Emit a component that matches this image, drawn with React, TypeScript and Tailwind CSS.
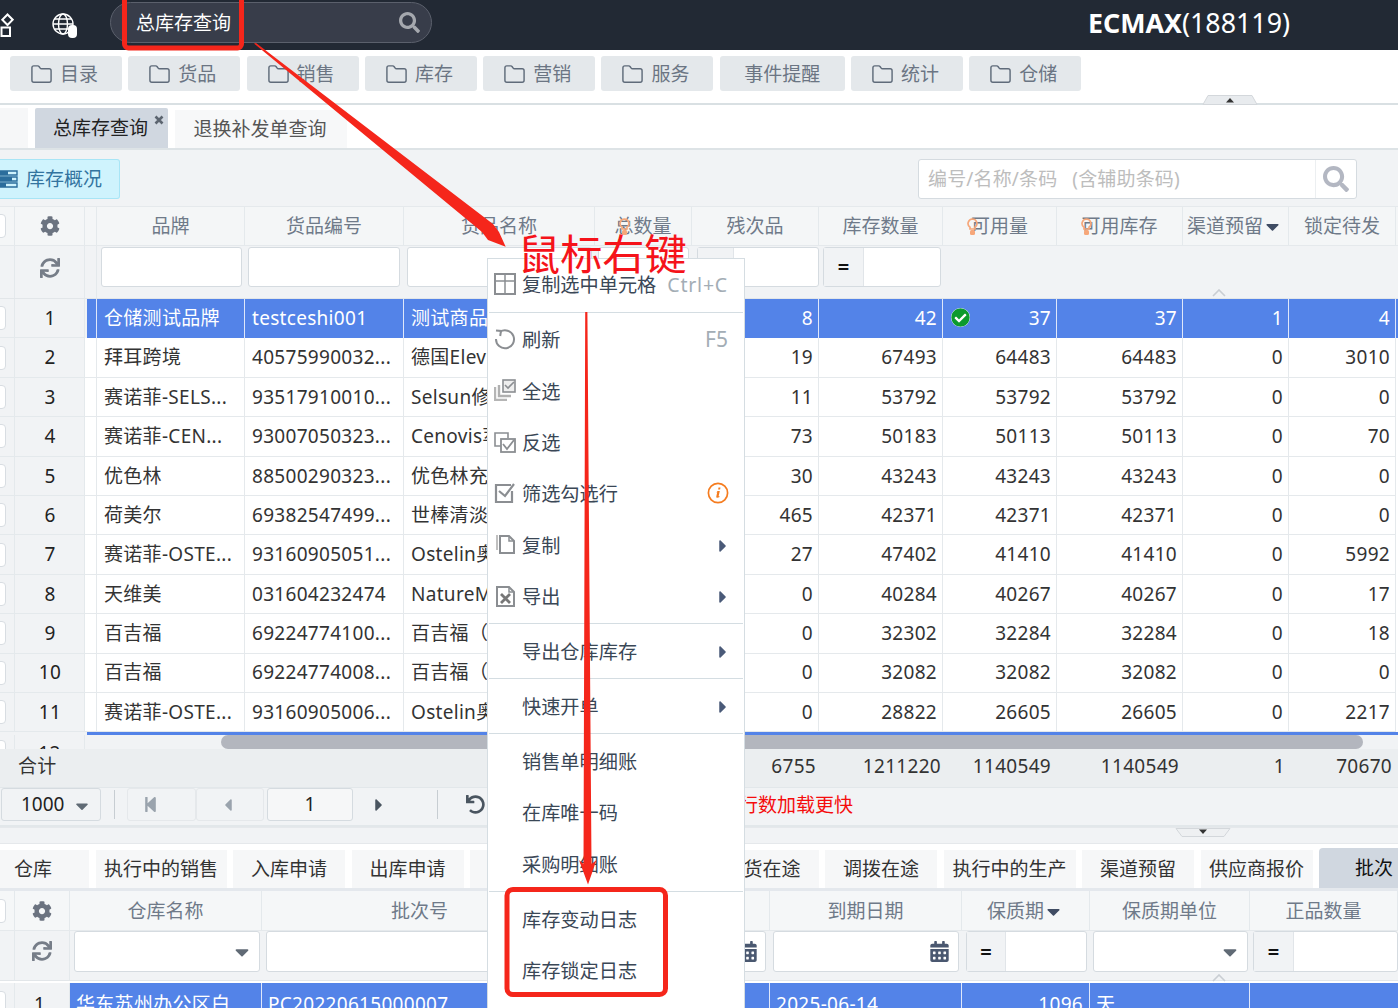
import React from "react";
import { Folder } from "lucide-react";
import {
  FaCog, FaSync, FaSearch, FaStepBackward, FaCaretLeft, FaCaretRight, FaCaretDown, FaUndo,
  FaCalendarAlt, FaCheckCircle,
} from "react-icons/fa";

const G1 = "grid grid-cols-[15px_70px_12px_148px_159px_191px_97px_127px_124px_114px_126px_106px_107px_2px]";
const G2 = "grid grid-cols-[15px_55px_192px_316px_192px_192px_128px_160px_148px]";

const rows: string[][] = [
  ["1", "仓储测试品牌", "testceshi001", "测试商品", "", "8", "42", "37", "37", "1", "4"],
  ["2", "拜耳跨境", "40575990032...", "德国Elevit", "", "19", "67493", "64483", "64483", "0", "3010"],
  ["3", "赛诺菲-SELS...", "93517910010...", "Selsun修护", "", "11", "53792", "53792", "53792", "0", "0"],
  ["4", "赛诺菲-CEN...", "93007050323...", "Cenovis萃益", "", "73", "50183", "50113", "50113", "0", "70"],
  ["5", "优色林", "88500290323...", "优色林充盈", "", "30", "43243", "43243", "43243", "0", "0"],
  ["6", "荷美尔", "69382547499...", "世棒清淡", "", "465", "42371", "42371", "42371", "0", "0"],
  ["7", "赛诺菲-OSTE...", "93160905051...", "Ostelin奥斯", "", "27", "47402", "41410", "41410", "0", "5992"],
  ["8", "天维美", "031604232474", "NatureMade", "", "0", "40284", "40267", "40267", "0", "17"],
  ["9", "百吉福", "69224774100...", "百吉福（棒", "", "0", "32302", "32284", "32284", "0", "18"],
  ["10", "百吉福", "69224774008...", "百吉福（棒", "", "0", "32082", "32082", "32082", "0", "0"],
  ["11", "赛诺菲-OSTE...", "93160905006...", "Ostelin奥斯", "", "0", "28822", "26605", "26605", "0", "2217"],
];

function NavBtn({ label, w = "w-[112px]", icon = true }: { label: string; w?: string; icon?: boolean }) {
  return (
    <div className={`${w} h-[35px] bg-[#e4e8eb] rounded-[3px] flex items-center justify-center gap-[7px] text-[#6b7583] ${icon ? "pr-[4px]" : ""}`}>
      {icon && <Folder size={23} strokeWidth={1.5} className="text-[#5f6b7a] mt-[2px]" />}
      <span className="mt-[2px]">{label}</span>
    </div>
  );
}

function Check() {
  return <div className="w-[20px] h-[24px] -ml-[14px] bg-white border border-[#d8dde2] rounded-[4px]" />;
}

function Head({ children, extra = "pt-px" }: { children?: React.ReactNode; extra?: string }) {
  return (
    <div className={`h-full flex items-center justify-center border-r border-[#e4e9ec] text-[#6f7a89] whitespace-nowrap overflow-visible ${extra}`}>
      {children}
    </div>
  );
}

function Bulb({ cls }: { cls: string }) {
  return (
    <svg width="11" height="17" viewBox="0 0 11 17" className={`absolute top-[6px] ${cls}`}>
      <path d="M5.5 1A4.5 4.5 0 0 0 3 9.2V11h5V9.2A4.5 4.5 0 0 0 5.5 1Z" fill="none" stroke="#f6a77a" strokeWidth="1.7" />
      <rect x="3" y="12" width="5" height="5" rx="1.5" fill="#f6a77a" />
    </svg>
  );
}

function Input({ cls = "h-[40px]" }: { cls?: string }) {
  return <div className={`bg-white border border-[#d5dbe0] rounded-[3px] ${cls}`} />;
}

function EqInput({ cls = "h-[40px]", eq = "w-[40px]" }: { cls?: string; eq?: string }) {
  return (
    <div className={`bg-white border border-[#d5dbe0] rounded-[3px] flex ${cls}`}>
      <div className={`${eq} h-full bg-[#f1f3f5] border-r border-[#e1e5e9] flex items-center justify-center text-[#111] font-bold text-[20px]`}>=</div>
    </div>
  );
}

function MenuSep() {
  return <div className="h-px my-[1.4px] mx-[1px] bg-[#d4dde2]" />;
}

function MenuItem({ icon, label, right }: { icon?: React.ReactNode; label: string; right?: React.ReactNode }) {
  return (
    <div className="h-[51.3px] flex items-center relative pl-[34px] pr-[16px] text-[#3a4756] text-[19.2px]">
      {icon && <div className="absolute left-[5px] top-[13px] w-[24px] h-[24px] flex items-center justify-center">{icon}</div>}
      <span className="flex-1 whitespace-nowrap pt-[2px]">{label}</span>
      {right}
    </div>
  );
}

const Arrow = () => <FaCaretRight size={20} className="text-[#4a5a78] -mr-[5px] mt-[2px]" />;

const s = { stroke: "#8b8e92", fill: "none", strokeWidth: 2 };
const IconTable = () => (
  <svg width="22" height="22" viewBox="0 0 22 22"><rect x="1" y="1" width="20" height="20" {...s} /><path d="M1 8h20M11 1v20" {...s} strokeWidth={1.5} /></svg>
);
const IconRefresh = () => (
  <svg width="22" height="22" viewBox="0 0 22 22"><path d="M6 3.8A9 9 0 1 1 2 11" {...s} /><path d="M2 2.5 7 3l-.8 5" {...s} /></svg>
);
const IconAll = () => (
  <svg width="22" height="22" viewBox="0 0 22 22"><path d="M1 8v13h12" {...s} strokeWidth={2.4} stroke="#b5b5b5" /><path d="M5 6v11h12" {...s} strokeWidth={2.4} stroke="#b0b0b0" /><rect x="9" y="1" width="12" height="12" {...s} fill="#eee" strokeWidth={1.6} /><path d="m11 6 3 3 6-6" {...s} strokeWidth={1.6} /></svg>
);
const IconInvert = () => (
  <svg width="22" height="22" viewBox="0 0 22 22"><path d="M7 15H1V2h13v5" {...s} strokeWidth={1.6} /><rect x="7" y="8" width="14" height="13" {...s} strokeWidth={1.8} /><path d="m9 13 4 5 7-9" {...s} strokeWidth={1.8} /></svg>
);
const IconCheck = () => (
  <svg width="22" height="22" viewBox="0 0 22 22"><path d="M18 9v11H2V3h15" {...s} strokeWidth={2.2} /><path d="m5 9 6 5 9-12" {...s} strokeWidth={2.2} /></svg>
);
const IconCopy = () => (
  <svg width="22" height="22" viewBox="0 0 22 22"><path d="M6 3v17h14V8l-5-5z" {...s} /><path d="M15 3v5h5" {...s} strokeWidth={1.5} /><path d="M3 2v15" {...s} stroke="#c0c0c0" /></svg>
);
const IconExport = () => (
  <svg width="22" height="22" viewBox="0 0 22 22"><path d="M3 2v19h17V7l-5-5z" {...s} /><path d="M15 2v5h5" {...s} strokeWidth={1.5} /><path d="m7 9 9 9M16 9l-9 9" stroke="#777" strokeWidth="2.8" /></svg>
);
const IconInfo = () => (
  <svg width="22" height="22" viewBox="0 0 22 22" className="-mr-px -mt-[1px]"><circle cx="11" cy="11" r="9.6" fill="none" stroke="#f57c1f" strokeWidth="1.7" /><path d="M11.5 5.6h2l-.4 1.9h-2zM10.6 9h2.2l-1.2 5.3.9-.3-.2 1.2c-1.8.8-3.3.7-3-.7l.9-4.3-.9.2z" fill="#f57c1f" /></svg>
);

export default function App() {
  return (
    <div className="relative w-[1398px] h-[1008px] overflow-hidden bg-white text-[19px] text-[#333] font-['Noto_Sans','Noto_Sans_CJK_SC',sans-serif]">
      {/* top bar */}
      <div className="h-[50px] bg-[#222934] flex items-center relative">
        <div className="w-[14px] overflow-hidden shrink-0 mt-[-1px]">
          <svg width="14" height="24" viewBox="0 0 14 24">
            <path d="M1.5 14.5h8.5v8.5H1.5z" fill="none" stroke="#fff" strokeWidth="2" />
            <path d="M7.5 1.5 12.7 6.7 7.5 12 2.3 6.7z" fill="none" stroke="#fff" strokeWidth="2" />
          </svg>
        </div>
        <div className="ml-[38px] w-[24px] h-[24px] relative shrink-0">
          <svg width="24" height="24" viewBox="0 0 24 24" fill="none" stroke="#fff" strokeWidth="1.4">
            <circle cx="11" cy="11" r="10" />
            <ellipse cx="11" cy="11" rx="4.5" ry="10" />
            <path d="M1 11h20M2.5 6h17M2.5 16h17" />
          </svg>
          <div className="absolute right-[-1px] bottom-[-1px] w-[9px] h-[13px] bg-white rounded-[4px]" />
        </div>
        <div className="ml-[34px] w-[322px] h-[41px] -mt-[5px] rounded-full bg-[#383d4a] border border-[#5b606c] flex items-center pl-[25px] pr-[11px] text-white">
          <span className="flex-1 pt-px">总库存查询</span>
          <FaSearch size={21} className="text-[#a5a8ae]" />
        </div>
        <div className="ml-[656px] -mt-[4px] text-white text-[26.8px] whitespace-nowrap"><b>ECMAX</b>(188119)</div>
      </div>

      {/* nav */}
      <div className="h-[55px] bg-white border-b-2 border-[#d9e0e3] flex gap-[6.3px] pl-[10px] pt-[6px] relative">
        <NavBtn label="目录" />
        <NavBtn label="货品" />
        <NavBtn label="销售" />
        <NavBtn label="库存" />
        <NavBtn label="营销" />
        <NavBtn label="服务" />
        <NavBtn label="事件提醒" w="w-[125px]" icon={false} />
        <NavBtn label="统计" />
        <NavBtn label="仓储" />
        <svg width="56" height="10" viewBox="0 0 56 10" className="absolute left-[1202px] bottom-[-2px]">
          <path d="M6 .5h44l5 9H1z" fill="#e8ebee" stroke="#d3d7db" />
          <path d="m28 3 4 4.5h-8z" fill="#333" />
        </svg>
      </div>

      {/* tabs */}
      <div className="h-[45px] bg-white border-b-2 border-[#dde3e6] flex items-end gap-[7px]">
        <div className="w-[28px] h-[40px] bg-[#f6f7f8]" />
        <div className="w-[133px] h-[40px] bg-[#d0d7e0] flex items-center pl-[18px] pt-px relative text-[#222] rounded-t-[2px]">
          总库存查询
          <svg width="10" height="10" viewBox="0 0 10 10" className="absolute right-[4px] top-[7px]">
            <path d="m1.5 1.5 7 7M8.5 1.5l-7 7" stroke="#5c6570" strokeWidth="2.6" />
          </svg>
        </div>
        <div className="w-[172px] h-[38px] bg-[#f7f8f9] flex items-center justify-center pt-px pr-[2px] text-[#555]">退换补发单查询</div>
      </div>

      {/* toolbar */}
      <div className="h-[56px] bg-[#f1f3f5] flex items-center justify-between pr-[41px] pt-px">
        <div className="w-[120px] h-[40px] bg-[#cff3fd] border border-[#a8e5f6] rounded-r-[3px] border-l-0 flex items-center text-[#33749f] gap-[8px]">
          <svg width="18" height="18" viewBox="0 0 18 18" className="shrink-0">
            <path d="M0 1h17v4H0zM0 7h17v4H0zM0 13h17v4H0z" fill="none" stroke="#2b6d9c" strokeWidth="1.4" />
            <path d="M0 1h8v4H0zM0 7h12v4H0zM0 13h6v4H0z" fill="#2b6d9c" />
          </svg>
          <span className="pt-[2px]">库存概况</span>
        </div>
        <div className="w-[439px] h-[40px] bg-white border border-[#d5dbe0] rounded-[3px] flex items-center pl-[9px] text-[#bdbdbd]">
          <span className="flex-1 whitespace-nowrap pt-[2px] tracking-[0.15px]">编号/名称/条码<span className="ml-[15px]">(含辅助条码)</span></span>
          <div className="w-[41px] h-full border-l border-[#eceff1] flex items-center justify-center">
            <FaSearch size={26} className="text-[#b3b7c2]" />
          </div>
        </div>
      </div>

      {/* upper table header */}
      <div className={`${G1} h-[40px] bg-[#f4f6f7] border-y border-[#e5e9ec]`}>
        <div className="h-full flex items-center border-r border-[#e4e9ec]"><Check /></div>
        <Head extra=""><FaCog size={20} className="text-[#6b7380]" /></Head>
        <Head />
        <Head>品牌</Head>
        <Head>货品编号</Head>
        <Head>货品名称</Head>
        <Head><span className="relative">总数量<Bulb cls="left-[5px]" /></span></Head>
        <Head>残次品</Head>
        <Head>库存数量</Head>
        <Head><span className="relative">可用量<Bulb cls="-left-[4px]" /></span></Head>
        <Head><span className="relative">可用库存<Bulb cls="left-0" /></span></Head>
        <Head extra="pt-px pr-[1px]">渠道预留<FaCaretDown size={21} className="text-[#3f4c63] -ml-[1px]" /></Head>
        <Head>锁定待发</Head>
        <div />
      </div>

      {/* upper filter */}
      <div className={`${G1} h-[53px] bg-[#f1f3f5] border-b border-[#e2e6e9] relative`}>
        <div className="border-r border-[#e4e9ec]" />
        <div className="flex items-center justify-center pb-[9px] border-r border-[#e4e9ec]"><FaSync size={20} className="text-[#767d88]" /></div>
        <div className="border-r border-[#e4e9ec]" />
        <div className="pl-[4px] pr-[3px] pt-px"><Input /></div>
        <div className="pl-[3px] pr-[4px] pt-px"><Input /></div>
        <div className="px-[3px] pt-px"><Input /></div>
        <div className="px-[3px] pt-px"><Input /></div>
        <div className="pl-[5px] pt-px"><EqInput eq="w-[36px]" /></div>
        <div className="pl-[4px] pr-[2px] pt-px"><EqInput /></div>
        <div />
        <div />
        <svg width="14" height="8" viewBox="0 0 14 8" className="absolute left-[1212px] bottom-[1px] z-10">
          <path d="M1 7 7 1l6 6" fill="none" stroke="#c9ced3" strokeWidth="1.6" />
        </svg>
      </div>

      {/* upper body */}
      <div className="h-[450px] overflow-hidden bg-[#f1f3f5] tracking-[0.3px]">
        {rows.map((r, i) => {
          const sel = i === 0;
          const cell = sel
            ? "bg-[#5383e8] text-white border-r border-[#dfe7fa]"
            : "bg-white border-r border-b border-[#e5e9ec]";
          const left = "h-full flex items-center px-[7px] whitespace-nowrap overflow-hidden ";
          const right = "h-full flex items-center justify-end pr-[5px] ";
          return (
            <div key={r[0]} className={`${G1} h-[39.4px]`}>
              <div className="flex items-center border-r border-b border-[#e4e9ec] bg-[#f1f3f5]"><Check /></div>
              <div className="flex items-center justify-center pl-px border-r border-b border-[#e4e9ec] bg-[#f1f3f5] text-[#222]">{r[0]}</div>
              <div className={sel ? "bg-[#5383e8] ml-[2px] border-r border-[#dfe7fa]" : "bg-white border-r border-b border-[#e5e9ec]"} />
              <div className={left + cell}>{r[1]}</div>
              <div className={left + cell}>{r[2]}</div>
              <div className={left + cell}>{r[3]}</div>
              <div className={left + cell}>{r[4]}</div>
              <div className={right + cell}>{r[5]}</div>
              <div className={right + cell}>{r[6]}</div>
              <div className={right + cell + " relative"}>
                {sel && <FaCheckCircle size={19} className="absolute left-[8px] top-[9px] text-[#0c9a2e] bg-white rounded-full" />}
                {r[7]}
              </div>
              <div className={right + cell}>{r[8]}</div>
              <div className={right + cell}>{r[9]}</div>
              <div className={right + cell}>{r[10]}</div>
              <div className={sel ? "bg-[#5383e8]" : "bg-white"} />
            </div>
          );
        })}
        <div className="h-[3px] ml-[87px] bg-[#5383e8]" />
        <div className="flex h-[14px]">
          <div className="w-[85px] shrink-0 flex border-r border-[#e4e9ec]">
            <div className="w-[15px] shrink-0 border-r border-[#e4e9ec] overflow-hidden"><div className="pt-[5px]"><Check /></div></div>
            <div className="flex-1 text-center leading-[36px] text-[#222]">12</div>
          </div>
          <div className="flex-1 pl-[136px]">
            <div className="w-[1142px] h-[14px] bg-[#b3b6be] rounded-full" />
          </div>
        </div>
      </div>

      {/* totals */}
      <div className={`${G1} h-[39px] bg-[#ebeef0] border-b border-[#e2e7ea] items-center pb-[3px] tracking-[0.3px]`}>
        <div className="col-span-3 pl-[18px]">合计</div>
        <div />
        <div />
        <div />
        <div />
        <div className="text-right pr-[3px]">6755</div>
        <div className="text-right pr-[2px]">1211220</div>
        <div className="text-right pr-[6px]">1140549</div>
        <div className="text-right pr-[4px]">1140549</div>
        <div className="text-right pr-[4px]">1</div>
        <div className="text-right pr-[4px]">70670</div>
      </div>

      {/* pager */}
      <div className="h-[39px] bg-[#f1f3f5] border-b-2 border-[#e2e7ea] flex items-center pb-[4px]">
        <div className="w-[100px] h-[33px] ml-px border border-[#d5dbe0] rounded-[3px] flex items-center justify-between pl-[19px] pr-[8px] shrink-0 text-[#222]">
          1000<FaCaretDown size={20} className="text-[#606a75] mt-[3px]" />
        </div>
        <div className="w-px h-[29px] bg-[#c7cdd2] ml-[13px]" />
        <div className="w-[69px] h-[33px] ml-[12px] border border-[#e5e8eb] rounded-[3px] flex items-center pl-[14px] shrink-0"><FaStepBackward size={17} className="text-[#9aa3ad]" /></div>
        <div className="w-[68px] h-[33px] border border-[#e5e8eb] rounded-[3px] flex items-center pl-[21px] shrink-0"><FaCaretLeft size={20} className="text-[#9aa3ad]" /></div>
        <div className="w-[86px] h-[33px] ml-[3px] bg-[#f6f7f8] border border-[#d5dbe0] rounded-[3px] flex items-center justify-center shrink-0 text-[#222]">1</div>
        <FaCaretRight size={20} className="ml-[16px] text-[#4a5560] shrink-0" />
        <div className="w-px h-[29px] bg-[#c7cdd2] ml-[48px]" />
        <FaUndo size={19} className="ml-[28px] text-[#4a5560] shrink-0" />
        <div className="ml-[178px] pt-[2px] text-[#f50d0d] whitespace-nowrap">减少显示行数加载更快</div>
      </div>

      {/* splitter */}
      <div className="h-[17px] bg-[#f1f3f5] border-b border-[#e5e8eb] border-t border-t-[#e5e8eb] relative">
        <svg width="56" height="9" viewBox="0 0 56 9" className="absolute left-[1175px] top-0">
          <path d="M1 .5h54l-6 8H7z" fill="#eef0f2" stroke="#d3d7db" />
          <path d="M24 1.5h8l-4 4.5z" fill="#333" />
        </svg>
      </div>

      {/* lower tabs */}
      <div className="h-[47px] bg-white border-b-[3px] border-[#e4e8ed] flex items-end gap-[6.5px]">
        <div className="w-[89px] h-[38px] bg-[#f6f7f8] flex items-center pl-[14px]">仓库</div>
        <div className="w-[131px] h-[38px] bg-[#f6f7f8] flex items-center justify-center">执行中的销售</div>
        <div className="w-[112px] h-[38px] bg-[#f6f7f8] flex items-center justify-center">入库申请</div>
        <div className="w-[112px] h-[38px] bg-[#f6f7f8] flex items-center justify-center">出库申请</div>
        <div className="w-[230px] h-[38px] bg-[#f6f7f8] flex items-center justify-center">采购在途</div>
        <div className="w-[112px] h-[38px] bg-[#f6f7f8] flex items-center justify-center">到货在途</div>
        <div className="w-[112px] h-[38px] bg-[#f6f7f8] flex items-center justify-center">调拨在途</div>
        <div className="w-[132px] h-[38px] bg-[#f6f7f8] flex items-center justify-center">执行中的生产</div>
        <div className="w-[112px] h-[38px] bg-[#f6f7f8] flex items-center justify-center">渠道预留</div>
        <div className="w-[112px] h-[38px] bg-[#f6f7f8] flex items-center justify-center">供应商报价</div>
        <div className="flex-1 h-[40px] bg-[#d0d7e0] rounded-tl-[4px] flex items-center pl-[36px] text-[#111] whitespace-nowrap">批次</div>
      </div>

      {/* lower header */}
      <div className={`${G2} h-[40px] bg-[#f5f7f8] border-b border-[#e5e9ec]`}>
        <div className="h-full flex items-center border-r border-[#e4e9ec]"><Check /></div>
        <Head extra=""><FaCog size={20} className="text-[#6b7380]" /></Head>
        <Head extra="pt-[2px]">仓库名称</Head>
        <Head extra="pt-[2px]">批次号</Head>
        <Head extra="pt-[2px]">生产日期</Head>
        <Head extra="pt-[2px]">到期日期</Head>
        <Head extra="pt-[2px]">保质期<FaCaretDown size={21} className="text-[#3f4c63] -ml-[1px]" /></Head>
        <Head extra="pt-[2px]">保质期单位</Head>
        <Head extra="pt-[2px]">正品数量</Head>
      </div>

      {/* lower filter */}
      <div className={`${G2} h-[50px] bg-[#f1f3f5] border-b border-[#e2e6e9] relative`}>
        <div className="border-r border-[#e4e9ec]" />
        <div className="flex items-center justify-center pb-[9px] border-r border-[#e4e9ec]"><FaSync size={20} className="text-[#767d88]" /></div>
        <div className="pl-[4px] pr-[2px]"><div className="bg-white border border-[#d5dbe0] rounded-[3px] h-[41px] flex items-center justify-end pr-[6px]"><FaCaretDown size={22} className="text-[#606a75]" /></div></div>
        <div className="px-[4px]"><Input cls="h-[41px]" /></div>
        <div className="pl-[4px] pr-[4px]"><div className="bg-white border border-[#d5dbe0] rounded-[3px] h-[41px] flex items-center justify-end pr-[7px]"><FaCalendarAlt size={21} className="text-[#4a5870]" /></div></div>
        <div className="pl-[3px] pr-[3px]"><div className="bg-white border border-[#d5dbe0] rounded-[3px] h-[41px] flex items-center justify-end pr-[8px]"><FaCalendarAlt size={21} className="text-[#4a5870]" /></div></div>
        <div className="pl-[4px] pr-[3px]"><EqInput cls="h-[41px]" eq="w-[39px]" /></div>
        <div className="pl-[3px] pr-[2px]"><div className="bg-white border border-[#d5dbe0] rounded-[3px] h-[41px] flex items-center justify-end pr-[6px]"><FaCaretDown size={22} className="text-[#606a75]" /></div></div>
        <div className="pl-[3px]"><EqInput cls="h-[41px]" eq="w-[40px]" /></div>
        <svg width="14" height="8" viewBox="0 0 14 8" className="absolute left-[1212px] bottom-[-2px] z-10">
          <path d="M1 7 7 1l6 6" fill="none" stroke="#c9ced3" strokeWidth="1.6" />
        </svg>
      </div>

      {/* lower row */}
      <div className={`${G2} h-[39px] mt-[2px] text-white tracking-[0.3px]`}>
        <div className="border-r border-[#e4e9ec] bg-[#f1f3f5] flex items-center"><Check /></div>
        <div className="border-r border-[#e4e9ec] bg-[#f1f3f5] text-[#222] pl-[19px] pt-[4px] flex items-center">1</div>
        <div className="bg-[#5383e8] border-r border-[#dfe7fa] pl-[6px] pt-[4px] flex items-center whitespace-nowrap overflow-hidden">华东苏州办公区白</div>
        <div className="bg-[#5383e8] border-r border-[#dfe7fa] pl-[6px] pt-[4px] flex items-center">PC20220615000007</div>
        <div className="bg-[#5383e8] border-r border-[#dfe7fa]" />
        <div className="bg-[#5383e8] border-r border-[#dfe7fa] pl-[6px] pt-[4px] flex items-center">2025-06-14</div>
        <div className="bg-[#5383e8] border-r border-[#dfe7fa] pr-[6px] pt-[4px] flex items-center justify-end">1096</div>
        <div className="bg-[#5383e8] border-r border-[#dfe7fa] pl-[6px] pt-[4px] flex items-center">天</div>
        <div className="bg-[#5383e8]" />
      </div>

      {/* context menu */}
      <div className="absolute left-[487px] top-[258px] w-[258px] h-[770px] bg-white border border-[#d5dde2] z-20">
        <MenuItem icon={<IconTable />} label="复制选中单元格" right={<span className="text-[#a3adb5] text-[19.5px] tracking-[0.8px]">Ctrl+C</span>} />
        <MenuSep />
        <MenuItem icon={<IconRefresh />} label="刷新" right={<span className="text-[#a3adb5] text-[21px]">F5</span>} />
        <MenuItem icon={<IconAll />} label="全选" />
        <MenuItem icon={<IconInvert />} label="反选" />
        <MenuItem icon={<IconCheck />} label="筛选勾选行" right={<IconInfo />} />
        <MenuItem icon={<IconCopy />} label="复制" right={<Arrow />} />
        <MenuItem icon={<IconExport />} label="导出" right={<Arrow />} />
        <MenuSep />
        <MenuItem label="导出仓库库存" right={<Arrow />} />
        <MenuSep />
        <MenuItem label="快速开单" right={<Arrow />} />
        <MenuSep />
        <MenuItem label="销售单明细账" />
        <MenuItem label="在库唯一码" />
        <MenuItem label="采购明细账" />
        <MenuSep />
        <MenuItem label="库存变动日志" />
        <MenuItem label="库存锁定日志" />
      </div>

      {/* annotations */}
      <svg className="absolute left-0 top-0 z-30 pointer-events-none" width="1398" height="1008" viewBox="0 0 1398 1008">
        <rect x="124.5" y="-4" width="117" height="52" rx="4" fill="none" stroke="#f5261b" strokeWidth="5" />
        <rect x="507" y="889.5" width="158.5" height="105" rx="6" fill="none" stroke="#f5261b" strokeWidth="5" />
        <path d="M254 43.5 256 43 493 224 499 232 505.7 246.7 488 240 482 232Z" fill="#f5261b" />
        <path d="M585.2 312h2.2L591.5 864 596.5 860 588 884.5 579 860 583.5 864Z" fill="#f5261b" />
      </svg>
      <div className="absolute left-[518px] top-[224px] z-30 text-[#f5131a] text-[42.2px] leading-[60px] whitespace-nowrap">鼠标右键</div>
    </div>
  );
}
